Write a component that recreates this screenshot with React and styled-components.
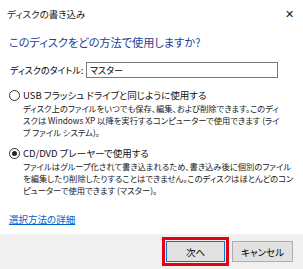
import React, { useState } from "react";
import styled, { createGlobalStyle } from "styled-components";

const GlobalStyle = createGlobalStyle`
    body {
        margin: 0;
        background: #ffffff;
        font-family: "Noto Sans CJK JP", "Noto Sans", sans-serif;
        font-feature-settings: "palt";
        color: #000000;
    }
`;

function Radio({ checked, title, lines, onSelect }) {
    return (
        <Option>
            <OptionRow onClick={onSelect}>
                <Circle checked={checked} />
                <span>{title}</span>
            </OptionRow>
            <Desc>
                {lines.map((line, i) => <div key={i}>{line}</div>)}
            </Desc>
        </Option>
    );
}

function App() {
    const [ mode, setMode ] = useState('master');

    return (
        <Window>
            <GlobalStyle />
            <TitleBar>
                <span>ディスクの書き込み</span>
                <Close>✕</Close>
            </TitleBar>

            <Content>
                <Heading>このディスクをどの方法で使用しますか?</Heading>

                <Field>
                    <label>ディスクのタイトル:</label>
                    <Input defaultValue="マスター" />
                </Field>

                <Radio
                    checked={mode === 'usb'}
                    onSelect={() => setMode('usb')}
                    title="USB フラッシュ ドライブと同じように使用する"
                    lines={[
                        'ディスク上のファイルをいつでも保存、編集、および削除できます。このディ',
                        'スクは Windows XP 以降を実行するコンピューターで使用できます (ライ',
                        'ブ ファイル システム)。'
                    ]}
                />

                <Spacer />

                <Radio
                    checked={mode === 'master'}
                    onSelect={() => setMode('master')}
                    title="CD/DVD プレーヤーで使用する"
                    lines={[
                        'ファイルはグループ化されて書き込まれるため、書き込み後に個別のファイル',
                        'を編集したり削除したりすることはできません。このディスクはほとんどのコン',
                        'ピューターで使用できます (マスター)。'
                    ]}
                />

                <Link href="#">選択方法の詳細</Link>
            </Content>

            <Footer>
                <Button primary>次へ</Button>
                <Button>キャンセル</Button>
            </Footer>
        </Window>
    );
}

export default App;

const Window = styled.div`
    width: 303px;
    height: 269px;
    display: flex;
    flex-direction: column;
    overflow: hidden;
`;

const TitleBar = styled.div`
    height: 28px;
    padding: 0 9px 0 7px;
    display: flex;
    align-items: center;
    justify-content: space-between;
    font-size: 9.5px;
    color: #1a1a1a;
`;

const Close = styled.span`
    font-size: 11px;
    color: #111;
    margin-top: -3px;
`;

const Content = styled.div`
    flex: 1;
    padding: 0 9px;
    display: flex;
    flex-direction: column;
`;

const Heading = styled.h1`
    margin: 6px 0 0;
    font-size: 11.2px;
    line-height: 16px;
    font-weight: 400;
    color: #1c3f96;
    white-space: nowrap;
`;

const Field = styled.div`
    margin-top: 12px;
    height: 16px;
    display: flex;
    align-items: center;
    font-size: 9px;
    white-space: nowrap;

    label {
        width: 76px;
        padding-left: 1px;
    }
`;

const Input = styled.input`
    box-sizing: border-box;
    width: 192px;
    height: 16px;
    border: 1px solid #7a7a7a;
    padding: 0 3px;
    font-family: inherit;
    font-feature-settings: "palt";
    font-size: 9px;
    outline: none;
`;

const Option = styled.div`
    margin-top: 11px;
    display: flex;
    flex-direction: column;
`;

const OptionRow = styled.div`
    display: flex;
    align-items: center;
    gap: 3px;
    height: 12px;
    font-size: 9.5px;
    color: #111;
    white-space: nowrap;
    cursor: default;
`;

const Circle = styled.span`
    box-sizing: border-box;
    width: 11px;
    height: 11px;
    border-radius: 50%;
    border: 1px solid #333;
    display: flex;
    align-items: center;
    justify-content: center;

    &::after {
        content: "";
        width: 5px;
        height: 5px;
        border-radius: 50%;
        background: ${props => props.checked ? '#222' : 'transparent'};
    }
`;

const Desc = styled.div`
    padding-left: 14px;
    margin-top: 1px;
    font-size: 8.3px;
    line-height: 12px;
    color: #222;
    white-space: nowrap;
`;

const Spacer = styled.div`
    height: 0;
    margin-top: -2px;
`;

const Link = styled.a`
    margin-top: 17px;
    align-self: flex-start;
    font-size: 9.5px;
    line-height: 12px;
    color: #0066cc;
`;

const Footer = styled.div`
    height: 35px;
    background: #f0f0f0;
    display: flex;
    align-items: center;
    justify-content: flex-end;
    gap: 7px;
    padding-right: 10px;
`;

const Button = styled.button`
    box-sizing: border-box;
    width: ${props => props.primary ? '59px' : '61px'};
    height: 21px;
    background: #e1e1e1;
    border: 1px solid ${props => props.primary ? '#0078d7' : '#adadad'};
    font-family: inherit;
    font-feature-settings: "palt";
    font-size: 9.5px;
    color: #000;
    padding: 0;
    outline: ${props => props.primary ? '3px solid #e60012' : 'none'};
    outline-offset: 1px;
`;
